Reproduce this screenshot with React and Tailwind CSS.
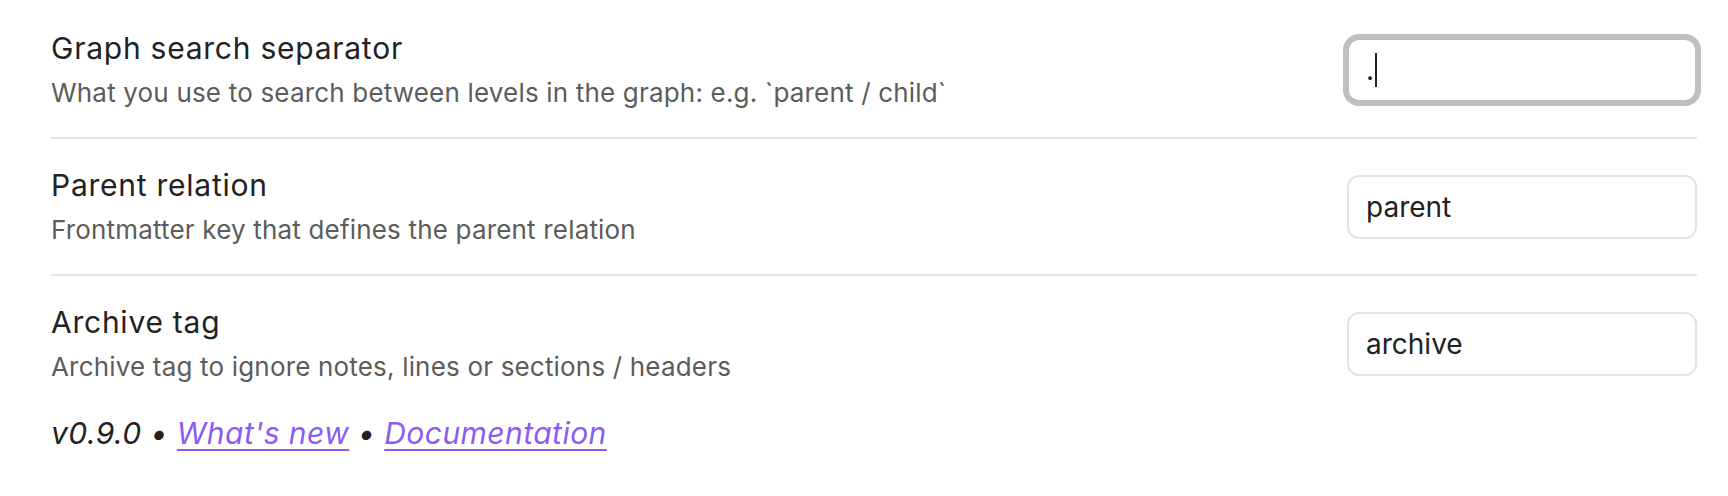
export default function App() {
  const font = { fontFamily: 'Inter, "Noto Sans", sans-serif' };
  const rows = [
    {
      title: "Graph search separator",
      desc: "What you use to search between levels in the graph: e.g. `parent / child`",
      value: ".",
      focused: true,
    },
    {
      title: "Parent relation",
      desc: "Frontmatter key that defines the parent relation",
      value: "parent",
    },
    {
      title: "Archive tag",
      desc: "Archive tag to ignore notes, lines or sections / headers",
      value: "archive",
      last: true,
    },
  ];
  return (
    <div className="w-[1728px] h-[496px] bg-white pl-[51px] pr-[31px] pt-[2px]" style={font}>
      {rows.map((r) => (
        <div
          key={r.title}
          className={
            "flex items-center justify-between h-[135px] box-content " +
            (r.last ? "" : "border-b-2 border-[#e3e3e3]")
          }
        >
          <div className="flex flex-col">
            <div className="text-[30px] leading-[39px] tracking-[0.75px] text-[#222222]">{r.title}</div>
            <div className="text-[26px] leading-[36px] tracking-[0.18px] mt-[7px] text-[#5c5c5c]">{r.desc}</div>
          </div>
          <div
            className={
              "w-[350px] h-[64px] rounded-[12px] border-2 flex items-center pl-[17px] text-[28px] text-[#222222] bg-white " +
              (r.focused
                ? "border-[#bfbfbf] shadow-[0_0_0_4px_#bfbfbf]"
                : "border-[#e3e3e3]")
            }
          >
            <span>{r.value}</span>
            {r.focused && <span className="inline-block w-[2px] h-[34px] bg-[#222222] ml-[1px]" />}
          </div>
        </div>
      ))}
      <div className="text-[30px] leading-[44px] tracking-[0.45px] italic text-[#222222]">
        v0.9.0 •{" "}
        <a className="text-[#8a5cf5] underline decoration-2 underline-offset-[5px]">What's new</a>{" "}
        •{" "}
        <a className="text-[#8a5cf5] underline decoration-2 underline-offset-[5px]">Documentation</a>
      </div>
    </div>
  );
}
